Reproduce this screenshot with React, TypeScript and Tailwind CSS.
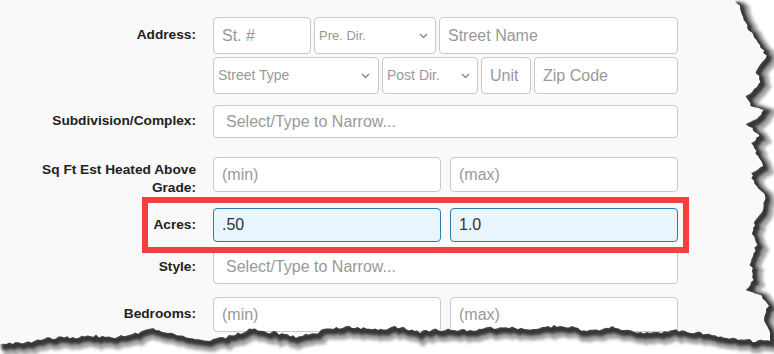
import * as React from 'react';

function rng(seed: number) {
  return () => {
    seed |= 0;
    seed = (seed + 0x6d2b79f5) | 0;
    let t = Math.imul(seed ^ (seed >>> 15), 1 | seed);
    t = (t + Math.imul(t ^ (t >>> 7), 61 | t)) ^ t;
    return ((t ^ (t >>> 14)) >>> 0) / 4294967296;
  };
}

// rough outline of the torn right and bottom edges
const rightEdge: [number, number][] = [
  [736, 0], [748, 28], [757, 40], [767, 58], [756, 70], [760, 82], [747, 96], [752, 106],
  [764, 110], [756, 119], [747, 124], [760, 136], [751, 143], [758, 156], [762, 166],
  [751, 173], [756, 186], [765, 196], [762, 212], [752, 228], [756, 245], [750, 262],
  [754, 280], [745, 290], [762, 296], [768, 306], [764, 318], [770, 332],
];
const bottomEdge: [number, number][] = [
  [770, 342], [744, 340], [718, 336], [700, 333], [676, 330], [650, 333], [628, 330],
  [612, 327], [590, 331], [560, 325], [530, 329], [500, 327], [470, 330], [445, 329],
  [420, 332], [398, 327], [378, 330], [352, 327], [330, 328], [312, 334], [296, 337],
  [276, 333], [252, 329], [232, 336], [210, 340], [186, 337], [168, 333], [150, 328],
  [138, 333], [118, 337], [96, 336], [70, 337], [44, 339], [22, 343], [0, 344],
];

function tornPath() {
  const r = rng(7);
  const pts: [number, number][] = [];
  const jag = (list: [number, number][], horiz: boolean) => {
    for (let i = 0; i < list.length - 1; i++) {
      const [x1, y1] = list[i];
      const [x2, y2] = list[i + 1];
      const steps = Math.max(2, Math.round(Math.hypot(x2 - x1, y2 - y1) / 3));
      for (let s = 0; s < steps; s++) {
        const t = s / steps;
        const j = (r() - 0.5) * 3.2;
        const x = x1 + (x2 - x1) * t + (horiz ? 0 : j);
        const y = y1 + (y2 - y1) * t + (horiz ? j : 0);
        pts.push([x, y]);
      }
    }
    pts.push(list[list.length - 1]);
  };
  jag(rightEdge, false);
  jag(bottomEdge, true);
  const line = pts.map(([x, y], i) => `${i ? 'L' : 'M'}${x.toFixed(1)} ${y.toFixed(1)}`).join(' ');
  return { line, outside: `${line} L0 354 L774 354 L774 0 Z` };
}

function TornEdge() {
  const { line, outside } = React.useMemo(tornPath, []);
  return (
    <svg className="pointer-events-none absolute inset-0 z-20" width="774" height="354" viewBox="0 0 774 354">
      <defs>
        <clipPath id="out">
          <path d={outside} />
        </clipPath>
        <filter id="soft" x="-5%" y="-5%" width="110%" height="110%">
          <feGaussianBlur stdDeviation="1.6" />
        </filter>
      </defs>
      <g clipPath="url(#out)">
        <path d={outside} fill="#ffffff" />
        <path d={line} transform="translate(3 4)" fill="none" stroke="#a8a8a8" strokeWidth="14" filter="url(#soft)" />
        <path d={line} transform="translate(1.5 2.5)" fill="none" stroke="#353535" strokeWidth="7" filter="url(#soft)" />
      </g>
    </svg>
  );
}

function Chevron() {
  return (
    <svg width="9" height="6" viewBox="0 0 9 6" className="shrink-0">
      <path d="M1 1l3.5 3.5L8 1" fill="none" stroke="#8a8a8a" strokeWidth="1.4" />
    </svg>
  );
}

const box = 'flex items-center h-full rounded-[4px] border border-[#c9c9c9] bg-white';
const label = 'w-[162px] flex items-center justify-end text-[13.7px] font-bold text-[#222]';

export default function App() {
  return (
    <div className="relative w-[774px] h-[354px] overflow-hidden bg-[#f9f9f9] font-['Liberation_Sans',Arial,sans-serif]">
      <div className="relative z-10 pt-[17px] pl-[34px]">
        {/* Address */}
        <div className="flex">
          <div className={`${label} h-[37px]`}>Address:</div>
          <div className="ml-[17px] w-[465px]">
            <div className="flex gap-[3px] h-[37px]">
              <div className={`${box} w-[98px] pl-[8px] text-[16px] text-[#999]`}>St. #</div>
              <div className={`${box} w-[122px] pl-[4px] pr-[7px] justify-between text-[13px] text-[#999]`}>
                Pre. Dir.
                <Chevron />
              </div>
              <div className={`${box} flex-1 pl-[8px] text-[16px] text-[#999]`}>Street Name</div>
            </div>
            <div className="mt-[3px] flex gap-[3px] h-[37px]">
              <div className={`${box} w-[166px] pl-[4px] pr-[8px] justify-between text-[14px] text-[#999]`}>
                Street Type
                <Chevron />
              </div>
              <div className={`${box} w-[96px] pl-[4px] pr-[7px] justify-between text-[14px] text-[#999]`}>
                Post Dir.
                <Chevron />
              </div>
              <div className={`${box} w-[50px] pl-[8px] text-[16px] text-[#999]`}>Unit</div>
              <div className={`${box} flex-1 pl-[8px] text-[16px] text-[#999]`}>Zip Code</div>
            </div>
          </div>
        </div>

        {/* Subdivision */}
        <div className="mt-[11px] flex h-[33px]">
          <div className={label}>Subdivision/Complex:</div>
          <div className={`${box} ml-[17px] w-[465px] pl-[12px] text-[16px] text-[#999]`}>Select/Type to Narrow...</div>
        </div>

        {/* Sq Ft */}
        <div className="mt-[19px] flex h-[35px]">
          <div className="w-[162px] pt-[4px] text-right text-[13.7px] leading-[18px] font-bold text-[#222]">
            Sq Ft Est Heated Above Grade:
          </div>
          <div className="ml-[17px] w-[465px] flex gap-[9px]">
            <div className={`${box} flex-1 pl-[8px] text-[16px] text-[#999]`}>(min)</div>
            <div className={`${box} flex-1 pl-[8px] text-[16px] text-[#999]`}>(max)</div>
          </div>
        </div>

        {/* Acres */}
        <div className="mt-[16px] flex h-[34px]">
          <div className={label}>Acres:</div>
          <div className="ml-[17px] w-[465px] flex gap-[9px]">
            <div className="flex items-center flex-1 rounded-[4px] border border-[#2b7cb3] bg-[#e9f5fc] pl-[8px] text-[16px] text-[#333]">.50</div>
            <div className="flex items-center flex-1 rounded-[4px] border border-[#2b7cb3] bg-[#e9f5fc] pl-[8px] text-[16px] text-[#333]">1.0</div>
          </div>
        </div>

        {/* Style */}
        <div className="mt-[8px] flex h-[34px]">
          <div className={label}>Style:</div>
          <div className={`${box} ml-[17px] w-[465px] pl-[12px] text-[16px] text-[#999]`}>Select/Type to Narrow...</div>
        </div>

        {/* Bedrooms */}
        <div className="mt-[13px] flex h-[35px]">
          <div className={label}>Bedrooms:</div>
          <div className="ml-[17px] w-[465px] flex gap-[9px]">
            <div className={`${box} flex-1 pl-[8px] text-[16px] text-[#999]`}>(min)</div>
            <div className={`${box} flex-1 pl-[8px] text-[16px] text-[#999]`}>(max)</div>
          </div>
        </div>
      </div>

      {/* highlight around the Acres row */}
      <div className="absolute z-10 left-[142px] top-[197px] w-[547px] h-[56px] border-[6px] border-[#f43f3f]" />

      <TornEdge />
    </div>
  );
}
